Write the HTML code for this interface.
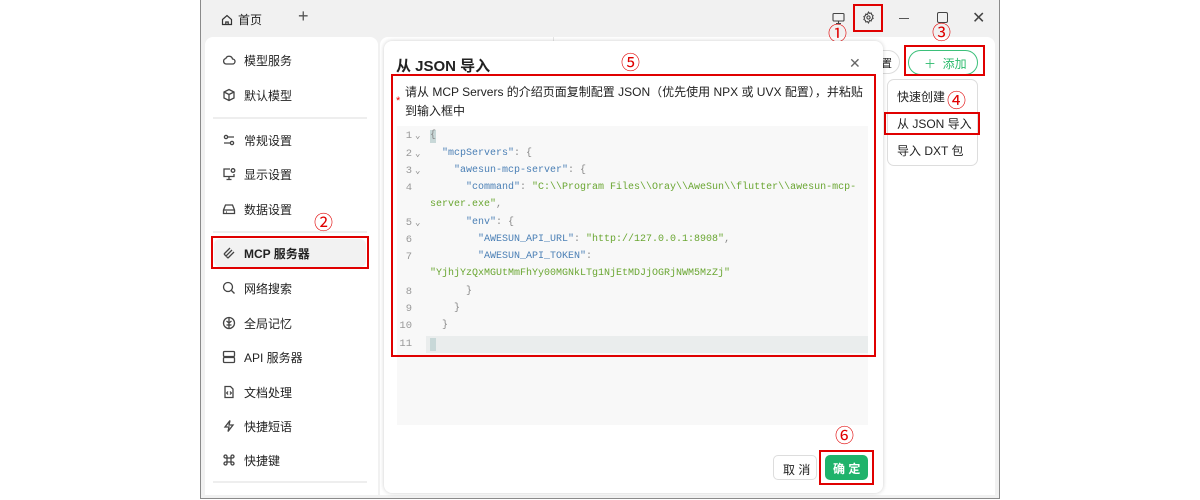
<!DOCTYPE html>
<html><head><meta charset="utf-8"><style>
*{margin:0;padding:0;box-sizing:border-box}
body{width:1200px;height:500px;background:#fff;position:relative;overflow:hidden;font-family:"Liberation Sans","Noto Sans CJK SC",sans-serif;color:#222}
.a{position:absolute}
.win{left:200px;top:0;width:800px;height:499px;background:#f1f1f1;border:1px solid #8a8a8a;border-top:none}
.side{left:205px;top:37px;width:173px;height:458px;background:#fff;border-radius:8px 8px 0 0}
.main{left:380px;top:37px;width:615px;height:458px;background:#fff;border-radius:8px 8px 0 0}
.it{position:absolute;left:222px;font-size:12px;color:#222;display:flex;align-items:center;gap:8px;height:20px}
.it svg{width:14px;height:14px;fill:none;stroke:#444;stroke-width:1.3}
.sep{position:absolute;left:213px;width:154px;height:2px;background:#eee}
.red{position:absolute;border:2px solid #e00000}
.num{position:absolute;color:#e00000;font-size:19px;line-height:20px}
.dlg{left:384px;top:41px;width:499px;height:452px;background:#fff;border-radius:8px;box-shadow:0 0 4px rgba(0,0,0,.2)}
.code{position:absolute;font-family:"Liberation Mono",monospace;font-size:10px;white-space:pre}
.ln{color:#999;font-family:"Liberation Mono",monospace;font-size:10.5px;position:absolute;left:398px;width:14px;text-align:right}
.k{color:#4a7fb5}.s{color:#6aa632}.p{color:#888}
</style></head><body>
<div class="a win"></div>
<div class="a" style="left:221px;top:11px;font-size:12px;display:flex;align-items:center;gap:5px"><svg width="12" height="12" viewBox="0 0 12 12" fill="none" stroke="#333" stroke-width="1.2"><path d="M1.5 5.5L6 1.5l4.5 4v5h-9z"/><path d="M4.8 10.5V8h2.4v2.5"/></svg>首页</div>
<div class="a" style="left:298px;top:6px;font-size:18px;color:#555">+</div>
<svg class="a" style="left:832px;top:12px" width="13" height="13" viewBox="0 0 13 13" fill="none" stroke="#444" stroke-width="1.1"><rect x="1" y="1.5" width="11" height="7.5" rx="1"/><path d="M6.5 9v2.5M4 11.5h5"/></svg>
<svg class="a" style="left:862px;top:11px" width="13" height="13" viewBox="0 0 24 24" fill="none" stroke="#444" stroke-width="2"><circle cx="12" cy="12" r="3"/><path d="M12 2l2 2.5 3-.8.8 3 2.7 1.5-1.2 2.8 1.2 2.8-2.7 1.5-.8 3-3-.8L12 22l-2-2.5-3 .8-.8-3L3.5 15.8 4.7 13 3.5 10.2 6.2 8.7l.8-3 3 .8z"/></svg>
<div class="red" style="left:853px;top:4px;width:30px;height:28px"></div>
<div class="a" style="left:899px;top:18px;width:10px;height:1px;background:#555"></div>
<div class="a" style="left:937px;top:12px;width:11px;height:11px;border:1.2px solid #444;border-radius:2px"></div>
<div class="a" style="left:972px;top:8px;font-size:16px;color:#444">✕</div>

<div class="a side"></div>
<div class="a main"></div>
<div class="a" style="left:553px;top:37px;width:1px;height:20px;background:#e6e6e6"></div>

<div class="it" style="top:50px"><svg viewBox="0 0 14 14"><path d="M4 11h6.5a2.5 2.5 0 0 0 0-5 3.5 3.5 0 0 0-6.7-.5A2.8 2.8 0 0 0 4 11z"/></svg>模型服务</div>
<div class="it" style="top:85px"><svg viewBox="0 0 14 14"><path d="M7 1.5l5 2.5v6L7 12.5 2 10V4z M2 4l5 2.5L12 4M7 6.5v6"/></svg>默认模型</div>
<div class="sep" style="top:117px"></div>
<div class="it" style="top:130px"><svg viewBox="0 0 14 14"><circle cx="4" cy="4" r="1.6"/><circle cx="10" cy="10" r="1.6"/><path d="M6 4h6M2 10h6"/></svg>常规设置</div>
<div class="it" style="top:164px"><svg viewBox="0 0 14 14"><path d="M8 2H2v7.5h10V7M7 9.5v3M4.5 12.5h5"/><circle cx="11" cy="3.5" r="1.8"/></svg>显示设置</div>
<div class="it" style="top:199px"><svg viewBox="0 0 14 14"><path d="M1.5 8l2-5h7l2 5v3.5h-11z M1.5 8h11M4 10h1"/></svg>数据设置</div>
<div class="sep" style="top:231px"></div>
<div class="a" style="left:214px;top:239px;width:152px;height:28px;background:#f2f2f2;border-radius:6px"></div>
<div class="it" style="top:243px;font-weight:bold"><svg viewBox="0 0 14 14"><path d="M2 8l6-6M4 10l6-6M6 12l6-6M2 8l4 4"/></svg>MCP 服务器</div>
<div class="red" style="left:211px;top:236px;width:158px;height:33px"></div>
<div class="it" style="top:278px"><svg viewBox="0 0 14 14"><circle cx="6" cy="6" r="4.5"/><path d="M9.5 9.5l3 3"/></svg>网络搜索</div>
<div class="it" style="top:313px"><svg viewBox="0 0 14 14"><circle cx="7" cy="7" r="5.5"/><path d="M7 1.5v11M4.5 5l2.5 2M9.5 5L7 7M4.5 9h5"/></svg>全局记忆</div>
<div class="it" style="top:347px"><svg viewBox="0 0 14 14"><rect x="1.5" y="1.5" width="11" height="5" rx="1"/><rect x="1.5" y="7.5" width="11" height="5" rx="1"/></svg>API 服务器</div>
<div class="it" style="top:382px"><svg viewBox="0 0 14 14"><path d="M3 1.5h5.5l2.5 2.5v8.5H3z M6 6.5l-1.3 1.5L6 9.5M8 6.5l1.3 1.5L8 9.5"/></svg>文档处理</div>
<div class="it" style="top:416px"><svg viewBox="0 0 14 14"><path d="M8 1.5L3 8h4l-1 4.5L11 6H7z"/></svg>快捷短语</div>
<div class="it" style="top:450px"><svg viewBox="0 0 14 14"><path d="M5 5h4v4H5z M5 5H3.5A1.5 1.5 0 1 1 5 3.5zM9 5V3.5A1.5 1.5 0 1 1 10.5 5zM9 9h1.5A1.5 1.5 0 1 1 9 10.5zM5 9v1.5A1.5 1.5 0 1 1 3.5 9z"/></svg>快捷键</div>
<div class="sep" style="top:481px"></div>
<div class="num" style="left:314px;top:214px">②</div>

<div class="a" style="left:868px;top:50px;width:32px;height:24px;border:1px solid #ddd;border-radius:12px;font-size:11px;padding:4px 0 0 12px">置</div>
<div class="a" style="left:908px;top:50px;width:70px;height:25px;border:1.3px solid #3cc07a;border-radius:13px;color:#2dbb6d;font-size:12px;padding:4px 0 0 15px">＋&nbsp; 添加</div>
<div class="red" style="left:904px;top:45px;width:81px;height:31px"></div>
<div class="num" style="left:932px;top:24px">③</div>
<div class="a" style="left:887px;top:79px;width:91px;height:87px;border:1px solid #ddd;border-radius:7px;background:#fff"></div>
<div class="a" style="left:897px;top:88px;font-size:12px">快速创建</div>
<div class="a" style="left:897px;top:115px;font-size:12px">从 JSON 导入</div>
<div class="a" style="left:897px;top:142px;font-size:12px">导入 DXT 包</div>
<div class="red" style="left:884px;top:112px;width:96px;height:23px"></div>
<div class="num" style="left:947px;top:92px">④</div>
<div class="num" style="left:828px;top:25px">①</div>

<div class="a dlg"></div>
<div class="a" style="left:396px;top:55px;font-size:15px;font-weight:bold">从 JSON 导入</div>
<div class="a" style="left:849px;top:55px;font-size:14px;color:#666">✕</div>
<div class="a" style="left:396px;top:95px;color:#e00;font-size:11px">*</div>
<div class="a" style="left:405px;top:83px;font-size:12px;line-height:19px;white-space:nowrap">请从 MCP Servers 的介绍页面复制配置 JSON（优先使用 NPX 或 UVX 配置），并粘贴<br>到输入框中</div>
<div class="a" style="left:397px;top:126px;width:471px;height:299px;background:#f8f8f8"></div>
<div class="a" style="left:426px;top:336px;width:442px;height:17px;background:#eaeded"></div>
<div class="a" style="left:430px;top:130px;width:6px;height:13px;background:#c8d8d8"></div>
<div class="a" style="left:430px;top:338px;width:6px;height:13px;background:#c8d8d8"></div>
<div class="ln" style="top:130px">1</div><div class="ln" style="top:148px">2</div><div class="ln" style="top:165px">3</div><div class="ln" style="top:182px">4</div><div class="ln" style="top:217px">5</div><div class="ln" style="top:234px">6</div><div class="ln" style="top:251px">7</div><div class="ln" style="top:286px">8</div><div class="ln" style="top:303px">9</div><div class="ln" style="top:320px">10</div><div class="ln" style="top:338px">11</div>
<div class="code p" style="left:415px;top:131px;font-size:9px">⌄</div><div class="code p" style="left:415px;top:149px;font-size:9px">⌄</div><div class="code p" style="left:415px;top:166px;font-size:9px">⌄</div><div class="code p" style="left:415px;top:218px;font-size:9px">⌄</div>
<div class="code p" style="left:430px;top:130px">{</div>
<div class="code" style="left:442px;top:148px"><span class="k">"mcpServers"</span><span class="p">: {</span></div>
<div class="code" style="left:454px;top:165px"><span class="k">"awesun-mcp-server"</span><span class="p">: {</span></div>
<div class="code" style="left:466px;top:182px"><span class="k">"command"</span><span class="p">: </span><span class="s">"C:\\Program Files\\Oray\\AweSun\\flutter\\awesun-mcp-</span></div>
<div class="code s" style="left:430px;top:199px">server.exe"<span class="p">,</span></div>
<div class="code" style="left:466px;top:217px"><span class="k">"env"</span><span class="p">: {</span></div>
<div class="code" style="left:478px;top:234px"><span class="k">"AWESUN_API_URL"</span><span class="p">: </span><span class="s">"http://127.0.0.1:8908"</span><span class="p">,</span></div>
<div class="code" style="left:478px;top:251px"><span class="k">"AWESUN_API_TOKEN"</span><span class="p">:</span></div>
<div class="code s" style="left:430px;top:268px">"YjhjYzQxMGUtMmFhYy00MGNkLTg1NjEtMDJjOGRjNWM5MzZj"</div>
<div class="code p" style="left:466px;top:286px">}</div>
<div class="code p" style="left:454px;top:303px">}</div>
<div class="code p" style="left:442px;top:320px">}</div>
<div class="red" style="left:391px;top:74px;width:485px;height:283px"></div>
<div class="num" style="left:621px;top:54px">⑤</div>
<div class="a" style="left:773px;top:455px;width:44px;height:25px;border:1px solid #ddd;border-radius:5px;font-size:12px;padding:5px 0 0 9px">取 消</div>
<div class="a" style="left:825px;top:455px;width:43px;height:25px;background:#1fb36b;border-radius:5px;font-size:12px;color:#fff;font-weight:bold;padding:5px 0 0 8px">确 定</div>
<div class="red" style="left:819px;top:450px;width:55px;height:35px"></div>
<div class="num" style="left:835px;top:427px">⑥</div>
</body></html>
